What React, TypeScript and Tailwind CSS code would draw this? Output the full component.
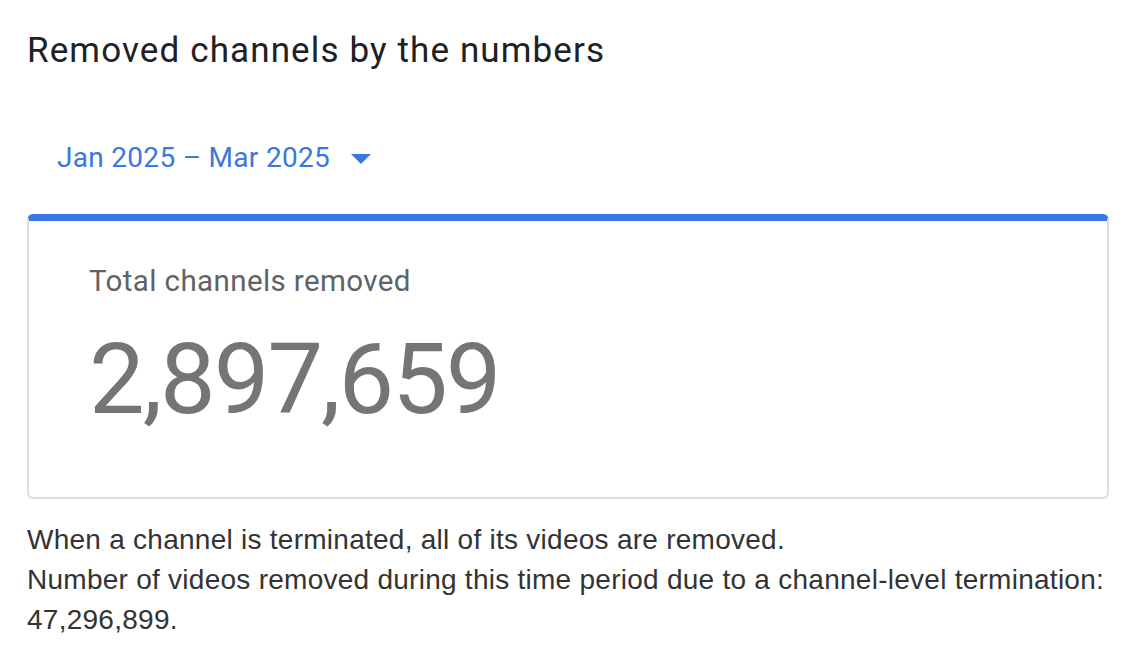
import React from 'react';

const App: React.FC = () => {
  return (
    <div className="min-h-screen bg-white pl-[27px] pr-[19px] pt-[29px]">
      <h2 className="font-['Roboto',sans-serif] text-[35px] leading-[44px] tracking-[1.12px] font-normal text-[#202124]">
        Removed channels by the numbers
      </h2>

      {/* Date range picker */}
      <div className="mt-[69px] pl-[30px]">
        <button className="flex items-center gap-[21px] font-['Roboto',sans-serif] text-[28px] leading-[32px] tracking-[0.3px] text-[#3a77e0]">
          <span>Jan 2025 – Mar 2025</span>
          <svg width="20" height="10" viewBox="0 0 20 10" className="mt-[1px]">
            <path d="M0 0 L20 0 L10 10 Z" fill="#3a77e0" />
          </svg>
        </button>
      </div>

      {/* Stat card */}
      <div className="mt-[40px] rounded-[6px] border-x-2 border-b-2 border-t-[7px] border-x-[#dadce0] border-b-[#dadce0] border-t-[#3a77e0] pl-[60px] pt-[42px] pb-[63px]">
        <div className="font-['Roboto',sans-serif] text-[29.5px] leading-[36px] tracking-[0.4px] text-[#5f6368]">
          Total channels removed
        </div>
        <div className="mt-[25px] font-['Roboto',sans-serif] text-[99px] leading-[110px] tracking-[-2px] font-normal text-[#757575]">
          2,897,659
        </div>
      </div>

      <div className="mt-[21px] font-['Liberation_Sans',Arial,sans-serif] text-[28px] leading-[40px] tracking-[0.26px] text-[#333333]">
        <p>When a channel is terminated, all of its videos are removed.</p>
        <p>Number of videos removed during this time period due to a channel-level termination: 47,296,899.</p>
      </div>
    </div>
  );
};

export default App;
